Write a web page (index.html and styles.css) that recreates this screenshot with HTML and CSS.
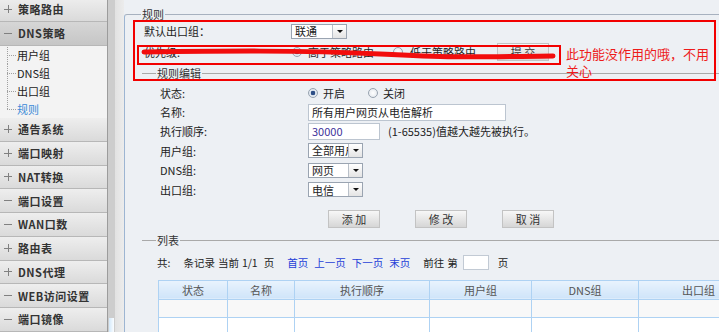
FILE: index.html
```html
<!DOCTYPE html>
<html lang="zh-CN">
<head>
<meta charset="utf-8">
<title>DNS策略 - 规则</title>
<link rel="stylesheet" href="styles.css">
</head>
<body>
<div class="page">
  <nav class="side">
    <div class="menu-list">
      <div class="mi"><span class="sign plus"></span>策略路由</div>
      <div class="mi open"><span class="sign"></span>DNS策略</div>
      <ul class="sub">
        <li>用户组</li>
        <li>DNS组</li>
        <li>出口组</li>
        <li class="cur">规则</li>
      </ul>
      <div class="mi"><span class="sign plus"></span>通告系统</div>
      <div class="mi"><span class="sign plus"></span>端口映射</div>
      <div class="mi"><span class="sign plus"></span>NAT转换</div>
      <div class="mi"><span class="sign"></span>端口设置</div>
      <div class="mi"><span class="sign"></span>WAN口数</div>
      <div class="mi"><span class="sign plus"></span>路由表</div>
      <div class="mi"><span class="sign plus"></span>DNS代理</div>
      <div class="mi"><span class="sign"></span>WEB访问设置</div>
      <div class="mi"><span class="sign"></span>端口镜像</div>
    </div>
  </nav>
  <div class="scroll"><div class="thumb"></div></div>
  <div class="gutter"></div>
  <main class="main">
    <fieldset class="box">
      <legend>规则</legend>
      <div class="row r1">
        <span class="lbl">默认出口组：</span>
        <span class="sel w56"><span class="val">联通</span><span class="arr"></span></span>
      </div>
      <div class="row r2">
        <span class="lbl">优先级:</span>
        <span class="radio on"></span><span class="rt">高于策略路由</span>
        <span class="radio r2b"></span><span class="rt rtb">低于策略路由</span>
        <button class="btn sub-btn">提 交</button>
      </div>

      <fieldset class="grp edit">
        <legend>规则编辑</legend>
        <div class="frow first">
          <span class="flbl">状态:</span>
          <span class="radio on"></span><span class="rt rt2">开启</span>
          <span class="radio off2"></span><span class="rt rt2">关闭</span>
        </div>
        <div class="frow">
          <span class="flbl">名称:</span>
          <span class="ipt w198">所有用户网页从电信解析</span>
        </div>
        <div class="frow">
          <span class="flbl">执行顺序:</span>
          <span class="ipt w72 num">30000</span>
          <span class="hint">(1-65535)值越大越先被执行。</span>
        </div>
        <div class="frow">
          <span class="flbl">用户组:</span>
          <span class="sel w55"><span class="val clip">全部用户</span><span class="arr"></span></span>
        </div>
        <div class="frow">
          <span class="flbl">DNS组:</span>
          <span class="sel w55"><span class="val">网页</span><span class="arr"></span></span>
        </div>
        <div class="frow">
          <span class="flbl">出口组:</span>
          <span class="sel w55"><span class="val">电信</span><span class="arr"></span></span>
        </div>
        <div class="btns">
          <button class="btn">添 加</button>
          <button class="btn">修 改</button>
          <button class="btn">取 消</button>
        </div>
      </fieldset>

      <fieldset class="grp list">
        <legend>列表</legend>
        <div class="pager">
          <span>共:</span>
          <span class="g11">条记录</span>
          <span class="g3">当前</span>
          <span class="g3">1/1</span>
          <span class="g6">页</span>
          <a class="lk g13">首页</a>
          <a class="lk g6">上一页</a>
          <a class="lk g6">下一页</a>
          <a class="lk g6">末页</a>
          <span class="g13">前往</span>
          <span class="g3">第</span>
          <span class="pg-in"></span>
          <span class="g9">页</span>
        </div>
        <table class="tbl">
          <colgroup>
            <col class="c1"><col class="c2"><col class="c3"><col class="c4"><col class="c5"><col class="c6">
          </colgroup>
          <thead>
            <tr><th>状态</th><th>名称</th><th>执行顺序</th><th>用户组</th><th>DNS组</th><th>出口组</th></tr>
          </thead>
          <tbody>
            <tr class="odd"><td></td><td></td><td></td><td></td><td></td><td></td></tr>
            <tr><td></td><td></td><td></td><td></td><td></td><td></td></tr>
          </tbody>
        </table>
      </fieldset>
    </fieldset>
  </main>

  <div class="anno-box"></div>
  <div class="anno-box2"></div>
  <svg class="scribble" width="420" height="20" viewBox="0 0 420 20">
    <path d="M4 8 C 80 7, 160 6, 240 10 S 330 13, 413 12" fill="none" stroke="#f20d0d" stroke-width="5" stroke-linecap="round"/>
  </svg>
  <div class="anno-text">此功能没作用的哦，不用关心</div>
</div>
</body>
</html>
```

FILE: styles.css
```css
* { box-sizing: border-box; }
html, body { margin: 0; padding: 0; }
body {
  font-family: "Noto Sans CJK SC", "Noto Sans", sans-serif;
  font-size: 11px;
  color: #222;
  background: #edf0f4;
  overflow: hidden;
}
.page { display: flex; height: 332px; position: relative; }

/* sidebar */
.side {
  width: 108px; flex: none; overflow: hidden;
  background: #f3f3f3; border-right: 1px solid #9c9c9c;
}
.menu-list { margin-top: -2px; }
.mi {
  height: 23.75px; display: flex; align-items: center;
  padding-left: 4px; font-weight: 700; color: #333;
  letter-spacing: 0.5px; font-size: 11px;
  background: linear-gradient(#eeeeee, #dadada);
  border-bottom: 1px solid #b7b7b7;
}
.mi.open { background: linear-gradient(#d6d6d6, #c6c6c6); }
.sign {
  width: 8px; height: 9px; margin-right: 6px; flex: none;
  background: linear-gradient(#808080, #808080) center / 8px 1px no-repeat;
}
.sign.plus {
  background:
    linear-gradient(#808080, #808080) center / 8px 1px no-repeat,
    linear-gradient(#808080, #808080) center / 1px 8px no-repeat;
}
.sub { list-style: none; margin: 0; padding: 1px 0 0 7px; background: #f3f3f3; }
.sub li {
  height: 17.9px; display: flex; align-items: center; color: #222;
  background: repeating-linear-gradient(#a0a0a0 0 1px, transparent 1px 2px) 0 0 / 1px 100% no-repeat;
}
.sub li::before {
  content: ""; width: 9px; height: 0; margin-right: 1px;
  border-top: 1px dotted #a0a0a0;
}
.sub li:last-child {
  background: repeating-linear-gradient(#a0a0a0 0 1px, transparent 1px 2px) 0 0 / 1px 50% no-repeat;
}
.sub li.cur { color: #3b8ad8; }

.scroll {
  width: 7px; flex: none; background: #cdcdcd;
  display: flex; flex-direction: column; justify-content: flex-end;
}
.thumb { height: 14px; width: 5px; margin-left: 1px; background: linear-gradient(to right, #d3e9fb, #fbfdff); }
.gutter { width: 9px; flex: none; background: linear-gradient(to right, #e2e2e2, #ececec); }

/* main */
.main { flex: 1; min-width: 0; overflow: hidden; padding-top: 6px; }
.box {
  margin: 0; padding: 0; min-width: 0;
  border: 1px solid #a7b1bf; border-left-color: #9db5d2;
  border-right: none; border-bottom: none;
  border-radius: 3px 0 0 0; height: 340px;
}
legend { padding: 0 1px; line-height: 16px; font-size: 11px; color: #333; }
.box > legend { margin-left: 16px; }

.row { display: flex; align-items: center; padding-left: 19px; }
.r1 { height: 16px; margin-top: 1px; }
.r2 { height: 20px; margin-top: 3px; }
.lbl { width: 147px; flex: none; }

.sel {
  display: inline-flex; align-items: center; height: 15px; background: #fff;
  border: 1px solid #9aa4b1;
}
.w56 { width: 56px; }
.w55 { width: 55px; }
.sel .val {
  flex: 1; min-width: 0; padding-left: 3px; white-space: nowrap;
}
.sel .val.clip { overflow: hidden; height: 13px; line-height: 13px; }
.sel .arr {
  width: 14px; height: 13px; flex: none; border-left: 1px solid #b9c0c9;
  background: linear-gradient(#ffffff, #e4e4e4);
  display: flex; align-items: center; justify-content: center;
}
.sel .arr::after {
  content: ""; border-left: 3px solid transparent; border-right: 3px solid transparent;
  border-top: 3px solid #111;
}

.radio {
  width: 10px; height: 10px; border-radius: 50%; flex: none;
  border: 1px solid #98a3b0;
  background: radial-gradient(circle, #ffffff, #dfe4ea);
}
.radio.on { background: radial-gradient(circle, #2d4e86 0 2px, #e1e8f0 2.6px); }
.r2 .radio { margin-left: 1px; }
.r2 .rt { margin-left: 6px; }
.r2 .r2b { margin-left: 19px; }
.r2 .rtb { margin-left: 7px; }
.sub-btn { margin-left: 21px; }

.btn {
  width: 52px; height: 18px; padding: 0; flex: none;
  font-family: inherit; font-size: 11px; color: #333;
  border: 1px solid #c3c3c3;
  background: linear-gradient(#f7f7f7, #d6d6d6);
}

/* groups */
.grp {
  margin: 3px 0 0 17px; padding: 0; min-width: 0;
  border: none; border-top: 1px solid #a9a9a9;
}
.grp > legend { margin-left: 14px; }
.frow { height: 19.4px; display: flex; align-items: center; padding-left: 18px; }
.frow.first { margin-top: 2px; }
.flbl { width: 148px; flex: none; }
.rt2 { margin-left: 5px; }
.off2 { margin-left: 23px; }
.ipt {
  height: 17px; display: flex; align-items: center; padding: 0 3px;
  background: #fff; border: 1px solid #bcc5d0; white-space: nowrap;
}
.w198 { width: 198px; }
.w72 { width: 72px; }
.num { color: #40329a; }
.hint { margin-left: 8px; }
.btns { display: flex; gap: 35px; padding-left: 186px; margin-top: 10.6px; }

.list { margin-top: 4.5px; }
.pager { display: flex; align-items: center; height: 16px; margin-top: 6.5px; padding-left: 15px; font-size: 10.5px; }
.g3 { margin-left: 3px; }
.g6 { margin-left: 6px; }
.g9 { margin-left: 9px; }
.g11 { margin-left: 13px; }
.g13 { margin-left: 13px; }
.lk { color: #1f3fd8; }
.pg-in { width: 26px; height: 15px; margin-left: 5px; background: #fff; border: 1px solid #c2cad4; }

.tbl {
  margin: 9px 0 0 16px; border-collapse: collapse; table-layout: fixed; width: 600px;
}
.c1 { width: 69px; } .c2 { width: 67px; } .c3 { width: 135px; }
.c4 { width: 102px; } .c5 { width: 107px; } .c6 { width: 120px; }
.tbl th, .tbl td { border: 1px solid #aed2f3; padding: 0; }
.tbl th {
  height: 19px; font-weight: 400; color: #555; font-size: 11px;
  background: linear-gradient(#e9f3fd, #cfe4f9);
}
.tbl td { height: 18px; background: #fff; }
.tbl tr.odd td { background: #f8f8f8; }

/* annotations */
.anno-box { position: absolute; left: 133px; top: 20px; width: 583px; height: 61px; border: 2px solid #f20000; }
.anno-box2 { position: absolute; left: 137px; top: 45px; width: 424px; height: 20px; border: 2px solid #f20000; }
.scribble { position: absolute; left: 140px; top: 44px; }
.anno-text {
  position: absolute; left: 566px; top: 45px; width: 148px;
  color: #ee1b1b; font-size: 13px; line-height: 17px;
}
```
